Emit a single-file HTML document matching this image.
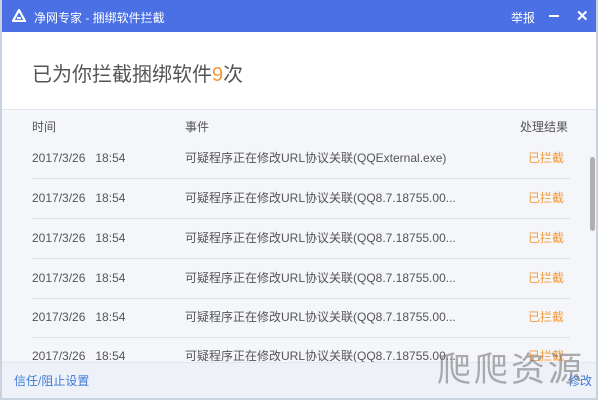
<!DOCTYPE html>
<html><head><meta charset="utf-8"><style>
*{margin:0;padding:0;box-sizing:border-box}
body{width:600px;height:400px;background:#fff;font-family:"Liberation Sans","Noto Sans CJK SC",sans-serif;position:relative;overflow:hidden}
.win{position:absolute;left:0;top:0;width:598px;height:400px;border-left:2px solid #c9d3e0;border-right:2px solid #c9d3e0;border-bottom:2px solid #c9d3e0;background:#f4f6f9;overflow:hidden}
.title{position:absolute;left:0;top:0;width:596px;height:32px;background:#4a70e4;color:#fff;font-size:12px}
.title .t{position:absolute;left:32px;top:9px}
.title .r{position:absolute;left:509px;top:9px}
.white{position:absolute;left:0;top:32px;width:596px;height:78px;background:#fff;border-bottom:1px solid #e2e6ec}
.big{position:absolute;left:30px;top:58px;font-size:20px;color:#555}
.hd{position:absolute;top:118px;font-size:12px;color:#555}
.row{position:absolute;left:30px;width:538px;height:40px;border-bottom:1px solid #dde2e8;font-size:12px;color:#555}
.row span{position:absolute;top:11px;line-height:17px;height:17px}
.o{color:#f39a3a}
.sb{position:absolute;left:588px;top:157px;width:5px;height:74px;background:#b0b0b0;border-radius:3px}
.foot{position:absolute;left:0;top:362px;width:596px;height:38px;background:#eef2f8;border-top:1px solid #e2e6ec}
.foot span{position:absolute;left:12px;top:9px;font-size:12px;color:#3e7bd8}
</style></head><body><div class="win">
<div class="title">
<svg style="position:absolute;left:10px;top:9px" width="14" height="13" viewBox="0 0 14 13"><path d="M7 1 L13 12 L1 12 Z" fill="none" stroke="#fff" stroke-width="2.2" stroke-linejoin="round"/><path d="M5 9 L9 9" stroke="#fff" stroke-width="2"/></svg>
<span class="t">净网专家 - 捆绑软件拦截</span>
<span class="r">举报</span>
<span style="position:absolute;left:547px;top:15px;width:10px;height:2px;background:#fff"></span>
<span style="position:absolute;left:574px;top:7px;font-size:15px;font-weight:bold">✕</span>
</div>
<div class="white"></div>
<div class="big">已为你拦截捆绑软件<span class="o">9</span>次</div>
<div class="hd" style="left:30px">时间</div>
<div class="hd" style="left:183px">事件</div>
<div class="hd" style="left:518px">处理结果</div>
<div class="row" style="top:139px"><span style="left:0">2017/3/26&nbsp;&nbsp;&nbsp;18:54</span><span style="left:153px">可疑程序正在修改URL协议关联(QQExternal.exe)</span><span class="o" style="left:496px">已拦截</span></div>
<div class="row" style="top:179px"><span style="left:0">2017/3/26&nbsp;&nbsp;&nbsp;18:54</span><span style="left:153px">可疑程序正在修改URL协议关联(QQ8.7.18755.00...</span><span class="o" style="left:496px">已拦截</span></div>
<div class="row" style="top:219px"><span style="left:0">2017/3/26&nbsp;&nbsp;&nbsp;18:54</span><span style="left:153px">可疑程序正在修改URL协议关联(QQ8.7.18755.00...</span><span class="o" style="left:496px">已拦截</span></div>
<div class="row" style="top:259px"><span style="left:0">2017/3/26&nbsp;&nbsp;&nbsp;18:54</span><span style="left:153px">可疑程序正在修改URL协议关联(QQ8.7.18755.00...</span><span class="o" style="left:496px">已拦截</span></div>
<div class="row" style="top:298px"><span style="left:0">2017/3/26&nbsp;&nbsp;&nbsp;18:54</span><span style="left:153px">可疑程序正在修改URL协议关联(QQ8.7.18755.00...</span><span class="o" style="left:496px">已拦截</span></div>
<div class="row" style="top:337px"><span style="left:0">2017/3/26&nbsp;&nbsp;&nbsp;18:54</span><span style="left:153px">可疑程序正在修改URL协议关联(QQ8.7.18755.00...</span><span class="o" style="left:496px">已拦截</span></div>
<div class="sb"></div>
<div class="foot"><span>信任/阻止设置</span><span style="left:566px">修改</span></div>
<div style="position:absolute;left:435px;top:342px;font-size:34px;color:rgba(120,120,120,0.6);letter-spacing:3px">爬爬资源</div>
</div></body></html>
